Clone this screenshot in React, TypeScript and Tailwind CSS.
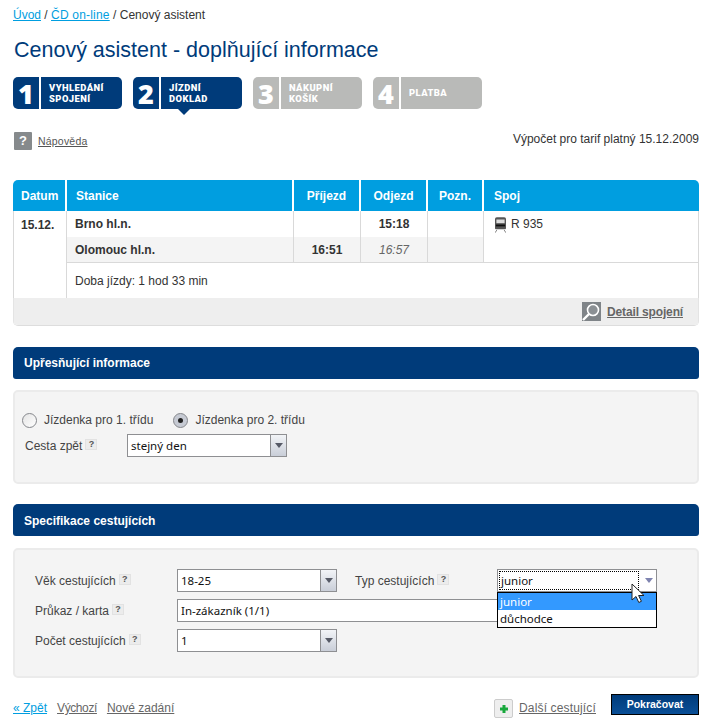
import React from "react";

function Hint({ className = "" }: { className?: string }) {
  return (
    <span className={"inline-flex h-[11px] w-[12px] items-center justify-center bg-[#ececec] border border-[#e2e2e2] text-[9px] font-bold leading-none text-[#555] " + className}>?</span>
  );
}

function Arrow({ dim = false }: { dim?: boolean }) {
  return (
    <span className={"flex h-full w-[16px] shrink-0 items-center justify-center border-l border-[#8e8f92] " + (dim ? "border-l-transparent bg-white" : "bg-gradient-to-b from-[#f2f4f7] to-[#c9ced8]")}>
      <svg width="8" height="5" viewBox="0 0 8 5"><path d="M0 0h8L4 5z" fill={dim ? "#7f84b0" : "#565a66"} /></svg>
    </span>
  );
}

function Select({ value, className = "" }: { value: string; className?: string }) {
  return (
    <div className={"flex h-[23px] items-center border border-[#8e8f92] bg-white font-['Noto_Sans',sans-serif] text-[11.5px] text-[#111] " + className}>
      <span className="flex-1 pl-[3px] leading-none">{value}</span>
      <Arrow />
    </div>
  );
}

function Step({ n, a, b, on }: { n: string; a: string; b?: string; on: boolean }) {
  const bg = on ? "bg-[#003b7a]" : "bg-[#b9bab8]";
  return (
    <div className="flex h-[32px] w-[109px] text-white">
      <div className={"flex w-[26px] items-center justify-center rounded-l-[5px] font-['Open_Sans',sans-serif] text-[27px] font-extrabold leading-none " + bg}>{n}</div>
      <div className={"ml-[2px] flex flex-1 flex-col justify-center rounded-r-[5px] pl-[8px] font-['Roboto',sans-serif] text-[9.4px] font-black leading-[11.5px] tracking-[0.45px] " + bg}>
        <span>{a}</span>
        {b && <span>{b}</span>}
      </div>
    </div>
  );
}

function Heading({ children, className = "" }: { children: React.ReactNode; className?: string }) {
  return (
    <div className={"flex h-[32px] items-center rounded-t-[5px] rounded-b-[3px] bg-[#003b7a] pl-[11px] text-[12px] font-bold text-white " + className}>{children}</div>
  );
}

function Radio({ on }: { on?: boolean }) {
  return (
    <span className={"relative inline-flex h-[15px] w-[15px] items-center justify-center rounded-full border border-[#85878c] " + (on ? "bg-[#c6cad3]" : "bg-gradient-to-br from-[#e4e4e4] to-white")}>
      {on && <span className="h-[5px] w-[5px] rounded-full bg-[#222]" />}
    </span>
  );
}

const th = "border-r-2 border-white px-[8px] text-[12px] font-bold text-white";
const td = "border-r border-[#d9d9d9] align-middle";

export default function App() {
  return (
    <div className="h-[722px] w-[707px] overflow-hidden bg-white pl-[13px] pr-[8px] font-['Liberation_Sans',Arial,sans-serif] text-[12px] text-[#333]">
      <div className="flex h-[28px] items-center pt-[1px]">
        <a className="text-[#009ee0] underline">Úvod</a>
        <span>&nbsp;/&nbsp;</span>
        <a className="tracking-[0.2px] text-[#009ee0] underline">ČD on-line</a>
        <span>&nbsp;/ Cenový asistent</span>
      </div>
      <h1 className="mt-[8px] h-[28px] pl-[1px] text-[21.5px] leading-[28px] text-[#003b7a]">Cenový asistent - doplňující informace</h1>

      <div className="relative mt-[13px] flex gap-[11px]">
        <Step n="1" a="VYHLEDÁNÍ" b="SPOJENÍ" on />
        <Step n="2" a="JÍZDNÍ" b="DOKLAD" on />
        <Step n="3" a="NÁKUPNÍ" b="KOŠÍK" on={false} />
        <Step n="4" a="PLATBA" on={false} />
        <span className="absolute left-[165px] top-[32px] h-0 w-0 border-x-[6px] border-t-[6px] border-x-transparent border-t-[#003b7a]" />
      </div>

      <div className="mt-[23px] flex h-[18px] justify-between">
        <div className="flex items-center">
          <span className="ml-[1px] flex h-[18px] w-[18px] items-center justify-center rounded-[1px] bg-[#868a8c] text-[13px] font-bold text-white">?</span>
          <a className="ml-[6px] mt-[2px] text-[10.5px] tracking-[0.2px] text-[#555] underline">Nápověda</a>
        </div>
        <span className="-mt-[1px] pt-[1px] leading-[14px] text-[#333]">Výpočet pro tarif platný 15.12.2009</span>
      </div>

      <div className="mt-[30px] w-[686px] overflow-hidden rounded-[5px] border-b border-[#ddd]">
        <table className="w-full table-fixed border-separate border-spacing-0">
          <colgroup>
            <col className="w-[54px]" />
            <col className="w-[227px]" />
            <col className="w-[67px]" />
            <col className="w-[67px]" />
            <col className="w-[56px]" />
            <col />
          </colgroup>
          <thead>
            <tr className="h-[31px] bg-[#009ee0]">
              <th className={th + " text-center"}>Datum</th>
              <th className={th + " pl-[9px] text-left"}>Stanice</th>
              <th className={th + " text-center"}>Příjezd</th>
              <th className={th + " text-center"}>Odjezd</th>
              <th className={th + " text-center"}>Pozn.</th>
              <th className="px-[10px] text-left text-[12px] font-bold text-white">Spoj</th>
            </tr>
          </thead>
          <tbody>
            <tr className="h-[26px]">
              <td rowSpan={3} className="border-x border-[#d9d9d9] pl-[7px] pt-[5px] text-left align-top font-bold">15.12.</td>
              <td className={td + " pl-[8px] font-bold"}>Brno hl.n.</td>
              <td className={td} />
              <td className={td + " text-center font-bold"}>15:18</td>
              <td className={td} />
              <td rowSpan={2} className="border-r border-b border-[#d9d9d9] pl-[11px] pt-[4px] align-top">
                <span className="flex items-center gap-[5px]">
                  <svg width="11" height="16" viewBox="0 0 12 17" className="mt-[1px]">
                    <path d="M2 0h8a2 2 0 0 1 2 2v10a1 1 0 0 1-1 1H1a1 1 0 0 1-1-1V2a2 2 0 0 1 2-2z" fill="#555" />
                    <rect x="1.5" y="2.5" width="9" height="4" fill="#ddd" />
                    <rect x="1" y="8" width="10" height="2" fill="#111" />
                    <path d="M2 14l-2 3M10 14l2 3" stroke="#777" strokeWidth="1" />
                  </svg>
                  R 935
                </span>
              </td>
            </tr>
            <tr className="h-[26px] bg-[#f4f4f4]">
              <td className={td + " border-b pl-[8px] font-bold"}>Olomouc hl.n.</td>
              <td className={td + " border-b text-center font-bold"}>16:51</td>
              <td className={td + " border-b text-center italic text-[#666]"}>16:57</td>
              <td className={td + " border-b"} />
            </tr>
            <tr className="h-[35px]">
              <td colSpan={5} className="border-r border-[#d9d9d9] pl-[8px]">Doba jízdy: 1 hod 33 min</td>
            </tr>
            <tr className="h-[27px] bg-[#eeeeee]">
              <td colSpan={6} className="border-x border-[#e4e4e4]">
                <div className="flex items-center justify-end pr-[15px]">
                  <span className="relative mr-[6px] h-[19px] w-[19px] bg-[#7f8488]">
                    <svg width="19" height="19" viewBox="0 0 19 19" className="absolute inset-0">
                      <circle cx="11" cy="8" r="5.5" fill="#8b9094" stroke="#fff" strokeWidth="1.6" />
                      <path d="M7 12l-6 6" stroke="#fff" strokeWidth="2.4" />
                    </svg>
                  </span>
                  <a className="font-bold tracking-[-0.15px] text-[#666] underline">Detail spojení</a>
                </div>
              </td>
            </tr>
          </tbody>
        </table>
      </div>

      <div className="mt-[21px] w-[686px]">
        <Heading>Upřesňující informace</Heading>
        <div className="mt-[11px] h-[94px] rounded-[5px] border-2 border-[#ebebeb] bg-[#f4f4f4] pl-[7px] pt-[19px]">
          <div className="flex h-[18px] items-center">
            <Radio />
            <span className="ml-[7px] text-[#444]">Jízdenka pro 1. třídu</span>
            <span className="ml-[20px] flex items-center"><Radio on /></span>
            <span className="ml-[7px] text-[#444]">Jízdenka pro 2. třídu</span>
          </div>
          <div className="mt-[5px] flex items-center pl-[3px]">
            <span className="flex w-[102px] items-center gap-[3px] text-[#444]">Cesta zpět <Hint className="-mt-[2px]" /></span>
            <Select value="stejný den" className="w-[160px]" />
          </div>
        </div>
      </div>

      <div className="mt-[20px] w-[686px]">
        <Heading className="pt-[1px]">Specifikace cestujících</Heading>
        <div className="relative mt-[12px] h-[130px] rounded-[5px] border-2 border-[#ebebeb] bg-[#f4f4f4] pl-[20px] pt-[19px]">
          <div className="flex items-center">
            <span className="flex w-[142px] items-center gap-[3px] text-[#444]">Věk cestujících <Hint className="-mt-[2px]" /></span>
            <Select value="18-25" className="w-[160px]" />
            <span className="ml-[18px] flex w-[142px] items-center gap-[3px] text-[#444]">Typ cestujících <Hint className="-mt-[2px]" /></span>
            <div className="flex h-[23px] w-[160px] items-center border border-[#8e8f92] bg-white font-['Noto_Sans',sans-serif] text-[11.5px] text-[#111]">
              <span className="m-[1px] flex h-[19px] flex-1 items-center border border-dotted border-black pl-[1px] leading-none">junior</span>
              <Arrow dim />
            </div>
          </div>
          <div className="mt-[7px] flex items-center">
            <span className="flex w-[142px] items-center gap-[3px] text-[#444]">Průkaz / karta <Hint className="-mt-[2px]" /></span>
            <Select value="In-zákazník (1/1)" className="w-[400px]" />
          </div>
          <div className="mt-[7px] flex items-center">
            <span className="flex w-[142px] items-center gap-[3px] text-[#444]">Počet cestujících <Hint className="-mt-[2px]" /></span>
            <Select value="1" className="w-[160px]" />
          </div>
          <div className="absolute left-[482px] top-[42px] w-[160px] border border-black bg-white font-['Noto_Sans',sans-serif] text-[11.5px] text-[#111]">
            <div className="flex h-[17px] items-center bg-[#3399ff] pl-[2px] text-white">junior</div>
            <div className="flex h-[17px] items-center pl-[2px]">důchodce</div>
          </div>
          <svg width="14" height="21" viewBox="0 0 14 21" className="absolute left-[616px] top-[33px]">
            <path d="M1 1v16l4-3.5 2.8 6 2.6-1.2-2.8-5.8H13z" fill="#fff" stroke="#222" strokeWidth="1" />
          </svg>
        </div>
      </div>

      <div className="mt-[16px] flex w-[686px] items-start justify-between">
        <div className="mt-[5px] flex items-center gap-[10px] text-[#666]">
          <a className="text-[#009ee0] underline">« Zpět</a>
          <a className="tracking-[-0.4px] underline">Výchozí</a>
          <a className="underline">Nové zadání</a>
        </div>
        <div className="flex items-start">
          <span className="mt-[5px] flex h-[19px] w-[19px] items-center justify-center rounded-[2px] border border-[#ccc] bg-[#eee]">
            <svg width="10" height="10" viewBox="0 0 10 10"><path d="M3.5 1h3v2.5H9v3H6.5V9h-3V6.5H1v-3h2.5z" fill="#18a83c" /></svg>
          </span>
          <a className="ml-[6px] mt-[5px] tracking-[0.15px] text-[#666] underline">Další cestující</a>
          <button className="ml-[15px] h-[21px] w-[88px] border border-black bg-gradient-to-b from-[#003b7a] to-[#0a4f97] text-[10.5px] font-bold text-white">Pokračovat</button>
        </div>
      </div>
    </div>
  );
}
